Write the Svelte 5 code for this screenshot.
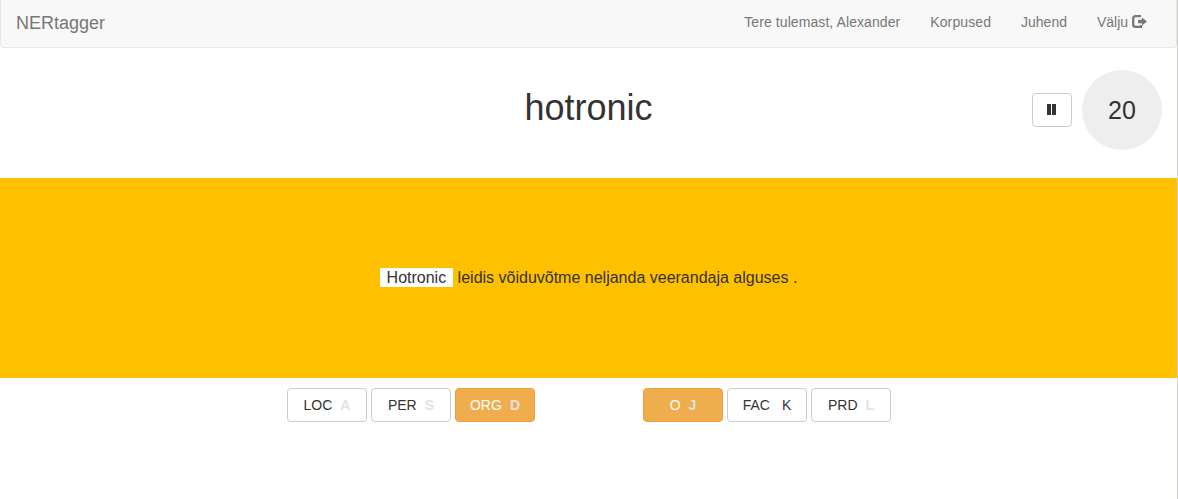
<script>
  const links = [
    { text: 'Tere tulemast, Alexander', name: 'greeting' },
    { text: 'Korpused', name: 'corpora' },
    { text: 'Juhend', name: 'guide' }
  ];
  const groups = [
    [
      { tag: 'LOC', key: 'A' },
      { tag: 'PER', key: 'S' },
      { tag: 'ORG', key: 'D', active: true }
    ],
    [
      { tag: 'O', key: 'J', active: true },
      { tag: 'FAC', key: 'K', plain: true },
      { tag: 'PRD', key: 'L' }
    ]
  ];
</script>

<div class="page">
  <nav>
    <a class="brand" href="#top">NERtagger</a>
    <div class="links">
      {#each links as link}
        <a class={link.name} href="#top">{link.text}</a>
      {/each}
      <a class="exit" href="#top">Välju
        <svg width="15" height="14" viewBox="0 0 15 14" aria-hidden="true">
          <path d="M9 1.2H3.8Q1.2 1.2 1.2 3.6V9.4Q1.2 11.8 3.8 11.8H9V10" fill="none" stroke="currentColor" stroke-width="2.3" />
          <path d="M10 2.4L15 6.5L10 10.6V8.3H6V4.7H10Z" fill="currentColor" />
        </svg>
      </a>
    </div>
  </nav>

  <header>
    <div></div>
    <h1>hotronic</h1>
    <div class="controls">
      <button class="pause" aria-label="Paus">
        <svg width="10" height="12" viewBox="0 0 10 12"><path d="M0 0H4V11H0ZM5 0H9V11H5Z" fill="#333" /></svg>
      </button>
      <div class="timer">20</div>
    </div>
  </header>

  <main>
    <p><mark>Hotronic</mark> leidis võiduvõtme neljanda veerandaja alguses .</p>
  </main>

  <footer>
    {#each groups as group}
      <div class="group">
        {#each group as item}
          <button class="tag" class:active={item.active}>
            <span>{item.tag}</span><span class="key" class:plain={item.plain}>{item.key}</span>
          </button>
        {/each}
      </div>
    {/each}
  </footer>
</div>

<style>
  :global(body) {
    background: #fff;
    overflow: hidden;
  }
  .page {
    box-sizing: border-box;
    height: 499px;
    border-right: 1px solid #d4d0c8;
    font: 14px/20px "Liberation Sans", Arial, sans-serif;
    color: #333;
  }
  nav {
    box-sizing: border-box;
    height: 48px;
    display: flex;
    justify-content: space-between;
    padding: 0 15px;
    background: #f8f8f8;
    border: 1px solid #e7e7e7;
    border-top: 0;
    border-radius: 0 0 4px 4px;
  }
  a {
    color: #777;
    text-decoration: none;
    padding-top: 12px;
  }
  .brand {
    font-size: 18px;
    padding-top: 13px;
  }
  .links {
    display: flex;
    gap: 30px;
    padding-right: 14px;
  }
  .greeting {
    letter-spacing: 0.08px;
  }
  .corpora {
    letter-spacing: 0.1px;
  }
  .exit {
    white-space: nowrap;
  }
  .exit svg {
    vertical-align: -2px;
  }
  header {
    height: 130px;
    display: grid;
    grid-template-columns: 1fr auto 1fr;
  }
  h1 {
    margin: 40px 0 0;
    font-size: 36px;
    line-height: 40px;
    font-weight: 400;
  }
  .controls {
    display: flex;
    justify-content: flex-end;
    align-items: center;
    gap: 10px;
    height: 80px;
    padding: 22px 15px 0 0;
  }
  button {
    box-sizing: border-box;
    height: 34px;
    display: flex;
    align-items: center;
    justify-content: center;
    padding: 0;
    font: inherit;
    color: #333;
    background: #fff;
    border: 1px solid #ccc;
    border-radius: 4px;
  }
  .pause {
    width: 40px;
  }
  .timer {
    width: 80px;
    line-height: 80px;
    border-radius: 50%;
    background: #eee;
    text-align: center;
    font-size: 25px;
  }
  main {
    height: 200px;
    display: flex;
    align-items: center;
    justify-content: center;
    background: #ffc000;
  }
  p {
    margin: 0;
    font-size: 16px;
    line-height: 24px;
  }
  mark {
    display: inline-block;
    line-height: 19px;
    padding: 0 7px;
    background: #fff;
    color: inherit;
  }
  footer {
    display: flex;
    justify-content: center;
    gap: 108px;
    padding-top: 10px;
  }
  .group {
    display: flex;
    gap: 4px;
  }
  .tag {
    width: 80px;
    gap: 8px;
    padding-left: 1px;
  }
  .key {
    font-weight: 700;
    color: #e2e2e2;
  }
  .key.plain {
    font-weight: 400;
    color: #333;
    padding-left: 4px;
  }
  .active {
    color: #fff;
    background: #f0ad4e;
    border-color: #eea236;
  }
</style>
